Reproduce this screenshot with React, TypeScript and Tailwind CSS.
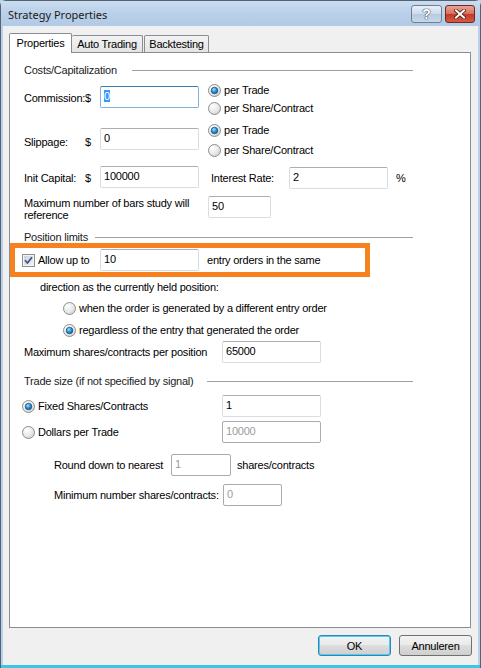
import React from "react";

const UI = "font-['Liberation_Sans',Arial,sans-serif] text-[11px] leading-[14px] tracking-[-0.22px] text-black";

function Radio({ checked }: { checked?: boolean }) {
  return (
    <svg width="13" height="13" viewBox="0 0 13 13" className="shrink-0">
      <defs>
        <radialGradient id="radFill" cx="0.35" cy="0.3" r="0.85">
          <stop offset="0" stopColor="#ffffff" />
          <stop offset="0.6" stopColor="#e6e6e6" />
          <stop offset="1" stopColor="#c9c9c9" />
        </radialGradient>
        <radialGradient id="radDot" cx="0.4" cy="0.35" r="0.75">
          <stop offset="0" stopColor="#a6e6ff" />
          <stop offset="0.45" stopColor="#2a9ad8" />
          <stop offset="1" stopColor="#0b4f88" />
        </radialGradient>
      </defs>
      <circle cx="6.5" cy="6.5" r="6" fill="url(#radFill)" stroke="#8c8e90" strokeWidth="1" />
      {checked && <circle cx="6.5" cy="6.5" r="3.3" fill="url(#radDot)" stroke="#1d4c78" strokeWidth="0.7" />}
    </svg>
  );
}

function CheckBox() {
  return (
    <svg width="13" height="13" viewBox="0 0 13 13" className="shrink-0">
      <defs>
        <linearGradient id="chkFill" x1="0" y1="0" x2="1" y2="1">
          <stop offset="0" stopColor="#c9d2df" />
          <stop offset="1" stopColor="#eef1f5" />
        </linearGradient>
      </defs>
      <rect x="0.5" y="0.5" width="12" height="12" fill="#f4f4f4" stroke="#8e8f8f" />
      <rect x="2" y="2" width="9" height="9" fill="url(#chkFill)" />
      <path d="M3 6.3 L5.4 9 L10 3.2" fill="none" stroke="#3e4f86" strokeWidth="1.7" strokeLinejoin="round" />
    </svg>
  );
}

function Field({
  value,
  w,
  focused,
  disabled,
  dark,
}: {
  value: string;
  w: string;
  focused?: boolean;
  disabled?: boolean;
  dark?: boolean;
}) {
  const border = focused
    ? "border-[#7fb0de] border-t-[#3d7bad]"
    : dark
    ? "border-[#a8acb0]"
    : "border-[#d8dde4] border-t-[#abadb3]";
  return (
    <div className={`${w} h-[22px] shrink-0 rounded-[2px] border bg-white ${border} pl-[3px] pt-[2px] ${disabled ? "text-[#9c9c9c]" : "text-black"}`}>
      {focused ? <span className="bg-[#3399ff] text-white">{value}</span> : value}
    </div>
  );
}

function GroupHeader({ title, tw, className }: { title: string; tw: string; className: string }) {
  return (
    <div className={`ml-[14px] flex w-[389px] items-center ${className}`}>
      <span className={`${tw} shrink-0 whitespace-nowrap text-[#1b1b1b]`}>{title}</span>
      <div className="h-px flex-1 bg-[#a0a0a0]" />
    </div>
  );
}

function WinButton({ label, def }: { label: string; def?: boolean }) {
  return (
    <div
      className={`flex h-[21px] w-[73px] items-center justify-center rounded-[3px] border ${
        def ? "border-[#3c7fb1] shadow-[inset_0_0_0_1px_#48d0f7]" : "border-[#707070]"
      } bg-[linear-gradient(#f2f2f2_0%,#ebebeb_45%,#dddddd_50%,#cfcfcf_100%)]`}
    >
      {label}
    </div>
  );
}

export default function App() {
  return (
    <div className={`relative h-[668px] w-[481px] overflow-hidden bg-[#b9d1ea] ${UI}`}>
      <div className="flex h-full flex-col rounded-t-[6px] border border-[#55626f] border-b-0">
        {/* caption */}
        <div className="flex h-[25px] shrink-0 items-start bg-[linear-gradient(#c9dcf0_0%,#b8cfe8_55%,#b2cae5_100%)]">
          <span className="ml-[7px] mt-[6px] font-['Noto_Sans',sans-serif] text-[11px] leading-[15px] tracking-normal text-[#1a1a1a]">
            Strategy Properties
          </span>
          <div className="ml-auto mr-[5px] mt-[4px] flex gap-[3px]">
            <div className="flex h-[18px] w-[31px] items-center justify-center rounded-[3px] border border-[#6f7f93] bg-[linear-gradient(#e8eff8_0%,#cddbeb_50%,#b7cadf_51%,#c7d8ea_100%)]">
              <span className="font-['Liberation_Sans',sans-serif] text-[14px] font-bold leading-[14px] text-white [text-shadow:0_0_1px_#37475c,0_0_1px_#37475c,0_0_1px_#37475c]">
                ?
              </span>
            </div>
            <div className="flex h-[18px] w-[30px] items-center justify-center rounded-[3px] border border-[#6d2a22] bg-[linear-gradient(#eba394_0%,#d9705c_48%,#c23b26_52%,#d55a40_100%)]">
              <svg width="12" height="10" viewBox="0 0 12 10">
                <path d="M2 1.5 L10 8.5 M10 1.5 L2 8.5" stroke="#4a1a14" strokeWidth="3.6" strokeLinecap="square" />
                <path d="M2 1.5 L10 8.5 M10 1.5 L2 8.5" stroke="#ffffff" strokeWidth="2" strokeLinecap="square" />
              </svg>
            </div>
          </div>
        </div>

        {/* client area */}
        <div className="mx-[2px] flex flex-1 flex-col bg-[#f0f0f0] pl-[6px]">
          {/* tabs */}
          <div className="mt-[7px] flex h-[19px] items-end">
            <div className="relative z-10 flex h-[20px] w-[63px] translate-y-[1px] items-start justify-center rounded-t-[2px] border border-b-0 border-[#898c95] bg-white pt-[2px]">
              Properties
            </div>
            <div className="flex h-[17px] w-[71px] items-start justify-center rounded-t-[2px] border border-b-0 border-l-0 border-[#898c95] bg-[linear-gradient(#f3f3f3,#e4e4e4)] pt-[1px]">
              Auto Trading
            </div>
            <div className="ml-[1px] flex h-[17px] w-[65px] items-start justify-center rounded-t-[2px] border border-b-0 border-[#898c95] bg-[linear-gradient(#f3f3f3,#e4e4e4)] pt-[1px]">
              Backtesting
            </div>
          </div>

          {/* tab page */}
          <div className="flex h-[576px] w-[462px] flex-col border border-[#898c95] bg-white">
            <GroupHeader title="Costs/Capitalization" tw="w-[108px]" className="mt-[10px] h-[14px]" />

            {/* commission */}
            <div className="mt-[4px] flex h-[39px] pl-[14px]">
              <span className="mt-[10px] w-[61px] whitespace-nowrap">Commission:</span>
              <span className="mt-[10px] w-[15px]">$</span>
              <div className="mt-[5px]">
                <Field value="0" w="w-[99px]" focused />
              </div>
              <div className="ml-[9px] flex flex-col">
                <div className="flex h-[18px] items-center gap-[3px]">
                  <Radio checked />
                  <span>per Trade</span>
                </div>
                <div className="flex h-[18px] items-center gap-[3px]">
                  <Radio />
                  <span>per Share/Contract</span>
                </div>
              </div>
            </div>

            {/* slippage */}
            <div className="flex h-[40px] pl-[14px]">
              <span className="mt-[15px] w-[61px] whitespace-nowrap">Slippage:</span>
              <span className="mt-[15px] w-[15px]">$</span>
              <div className="mt-[8px]">
                <Field value="0" w="w-[99px]" />
              </div>
              <div className="ml-[9px] flex flex-col">
                <div className="flex h-[20px] items-center gap-[3px]">
                  <Radio checked />
                  <span>per Trade</span>
                </div>
                <div className="flex h-[20px] items-center gap-[3px]">
                  <Radio />
                  <span>per Share/Contract</span>
                </div>
              </div>
            </div>

            {/* init capital / interest */}
            <div className="flex h-[32px] pl-[14px]">
              <span className="mt-[11px] w-[61px] whitespace-nowrap">Init Capital:</span>
              <span className="mt-[11px] w-[15px]">$</span>
              <div className="mt-[6px]">
                <Field value="100000" w="w-[99px]" />
              </div>
              <span className="ml-[12px] mt-[11px] w-[78px] whitespace-nowrap">Interest Rate:</span>
              <div className="mt-[7px]">
                <Field value="2" w="w-[99px]" />
              </div>
              <span className="ml-[8px] mt-[11px]">%</span>
            </div>

            {/* bars back */}
            <div className="flex h-[34px] pl-[14px]">
              <span className="mt-[5px] w-[184px] leading-[12px]">
                Maximum number of bars study will
                <br />
                reference
              </span>
              <div className="mt-[4px]">
                <Field value="50" w="w-[63px]" />
              </div>
            </div>

            <GroupHeader title="Position limits" tw="w-[71px]" className="mt-[5px] h-[12px]" />

            {/* pyramiding highlight */}
            <div className="ml-0 flex h-[34px] w-[360px] items-center border-[5px] border-[#f5821f]">
              <div className="ml-[7px]">
                <CheckBox />
              </div>
              <span className="ml-[3px] w-[62px] whitespace-nowrap">Allow up to</span>
              <Field value="10" w="w-[99px]" />
              <span className="ml-[8px] whitespace-nowrap">entry orders in the same</span>
            </div>

            <span className="ml-[30px] mt-[3px] h-[14px]">direction as the currently held position:</span>

            <div className="ml-[53px] mt-[3px] flex h-[22px] items-center gap-[3px]">
              <Radio />
              <span>when the order is generated by a different entry order</span>
            </div>
            <div className="ml-[53px] flex h-[22px] items-center gap-[3px]">
              <Radio checked />
              <span>regardless of the entry that generated the order</span>
            </div>

            <div className="flex h-[22px] items-center pl-[14px]">
              <span className="w-[198px] whitespace-nowrap">Maximum shares/contracts per position</span>
              <Field value="65000" w="w-[99px]" />
            </div>

            <GroupHeader title="Trade size (if not specified by signal)" tw="w-[183px]" className="mt-[11px] h-[14px]" />

            <div className="mt-[7px] flex h-[22px] items-center pl-[12px]">
              <div className="flex w-[200px] items-center gap-[3px]">
                <Radio checked />
                <span>Fixed Shares/Contracts</span>
              </div>
              <Field value="1" w="w-[99px]" />
            </div>
            <div className="mt-[4px] flex h-[22px] items-center pl-[12px]">
              <div className="flex w-[200px] items-center gap-[3px]">
                <Radio />
                <span>Dollars per Trade</span>
              </div>
              <Field value="10000" w="w-[99px]" disabled dark />
            </div>

            <div className="mt-[10px] flex h-[23px] items-center pl-[44px]">
              <span className="w-[117px] whitespace-nowrap">Round down to nearest</span>
              <Field value="1" w="w-[60px]" disabled dark />
              <span className="ml-[6px]">shares/contracts</span>
            </div>
            <div className="mt-[8px] flex h-[22px] items-center pl-[44px]">
              <span className="w-[169px] whitespace-nowrap">Minimum number shares/contracts:</span>
              <Field value="0" w="w-[59px]" disabled dark />
            </div>
          </div>

          {/* dialog buttons */}
          <div className="mt-[7px] flex justify-end gap-[8px] pr-[6px]">
            <WinButton label="OK" def />
            <WinButton label="Annuleren" />
          </div>
        </div>
        <div className="h-[3px] shrink-0 bg-[#3ec6e8]" />
      </div>
    </div>
  );
}
